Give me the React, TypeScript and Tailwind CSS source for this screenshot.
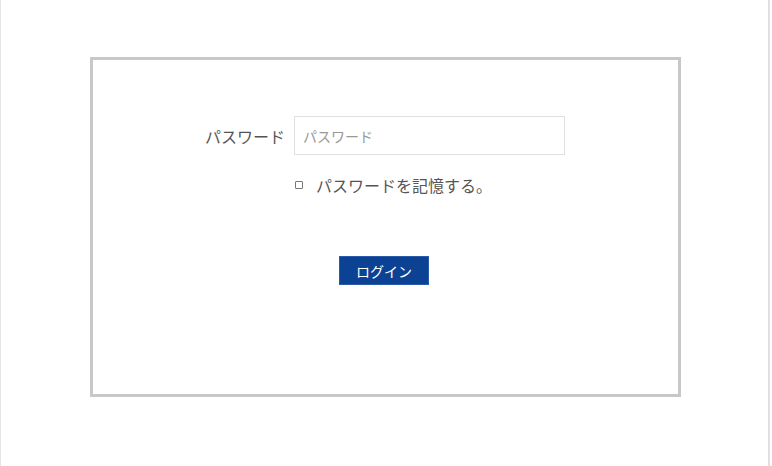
export default function App() {
  return (
    <div
      className="w-[770px] h-[466px] bg-white border-l border-l-[#e6e6e6] border-r-2 border-r-[#e0e0e0] pt-[57px] pl-[89px]"
      style={{ fontFamily: '"Noto Sans CJK JP", "Noto Sans", sans-serif' }}
    >
      <div className="w-[591px] h-[340px] border-[3px] border-[#c8c8c8] pt-[56px]">
        {/* パスワード入力 */}
        <div className="flex items-center">
          <label className="w-[192px] text-right text-[16px] text-[#555555] leading-none">
            パスワード
          </label>
          <input
            type="password"
            placeholder="パスワード"
            className="ml-[9px] w-[271px] h-[39px] border border-[#e0e0e0] px-[8px] text-[14px] text-[#555555] placeholder:text-[#999999] outline-none"
          />
        </div>

        {/* 記憶する */}
        <div className="mt-[20px] ml-[202px] flex items-center">
          <span className="w-[8px] h-[8px] border border-[#777777] rounded-[1px]" />
          <span className="ml-[13px] text-[16px] text-[#555555] leading-[20px]">
            パスワードを記憶する。
          </span>
        </div>

        {/* ログイン */}
        <div className="mt-[61px] ml-[246px]">
          <button
            type="button"
            className="w-[90px] h-[29px] bg-[#0b4293] border border-[#2a5aa8] text-white text-[14px] leading-none"
          >
            ログイン
          </button>
        </div>
      </div>
    </div>
  );
}
